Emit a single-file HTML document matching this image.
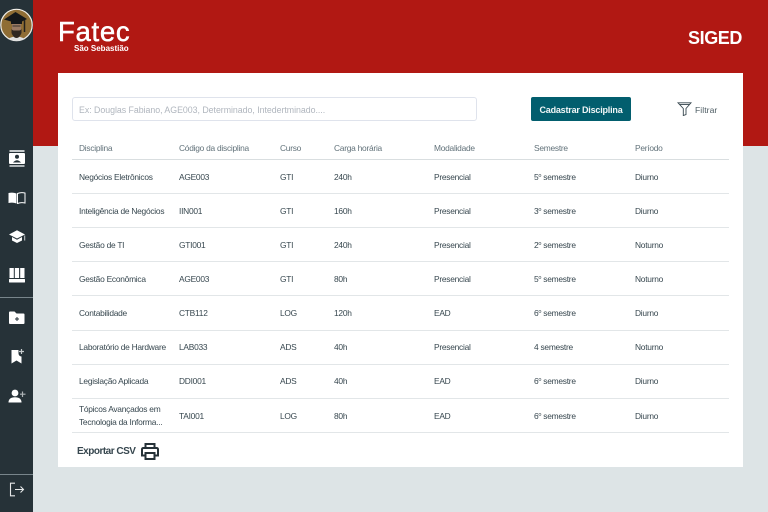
<!DOCTYPE html>
<html lang="pt-BR"><head><meta charset="utf-8"><title>SIGED</title>
<style>
*{margin:0;padding:0;box-sizing:border-box}
html,body{width:768px;height:512px;overflow:hidden;background:#dde4e6;font-family:"Liberation Sans",sans-serif}
div,span{position:absolute;white-space:nowrap}
.red{left:33px;top:0;width:735px;height:146px;background:#b11813}
.side{left:0;top:0;width:33px;height:512px;background:#263238}
.card{left:58px;top:73px;width:685px;height:394px;background:#fff}
.t{font-size:8.4px;line-height:12px;color:#37474f;letter-spacing:-.25px}
.h{font-size:8.4px;line-height:12px;color:#62727a;top:142px;letter-spacing:-.25px}
.l{left:72px;width:657px;height:1px;background:#e2e6e8}
.sep{left:0;width:33px;height:1px;background:#78858b}
svg{position:absolute}
sup{font-size:5.5px;line-height:0;vertical-align:3px}
</style></head><body>
<div class="red"></div>
<div class="side"></div>
<div class="sep" style="top:297px"></div>
<div class="sep" style="top:474px"></div>

<svg style="left:0;top:8px" width="33" height="34" viewBox="0 0 33 34">
<circle cx="16.5" cy="17" r="15.7" fill="#8f6d35" stroke="#f1efe9" stroke-width="1.2"/>
<path d="M8 31q8-5 17 0q-4 2-8.500 2t-8.500-2z" fill="#dfe0e0"/>
<path d="M12 13h9v9q0 6-4.500 7q-4.500-1-4.500-7z" fill="#9a7a64"/>
<path d="M11.500 21q1 1.500 2 1.500h6q1 0 2-1.500v4q-2 5-5 5t-5-5z" fill="#2f2822"/>
<rect x="12.500" y="17.500" width="8" height="1" fill="#3a312b"/>
<path d="M4 11.500L15.500 4 27 11l-5 2.500V16h-11v-2.500z" fill="#14171a"/>
<path d="M24.500 12v12" stroke="#23201d" stroke-width="1.500"/>
</svg>

<div style="left:58px;top:16px;font-size:27.5px;line-height:32px;color:#fff;letter-spacing:.7px;-webkit-text-stroke:.5px #fff">Fatec</div>
<div style="left:74px;top:43px;font-size:8px;line-height:11px;font-weight:700;color:#fff;letter-spacing:0">São Sebastião</div>
<div style="left:688px;top:26px;font-size:18px;line-height:24px;font-weight:700;color:#fff;letter-spacing:-.4px">SIGED</div>

<!-- sidebar icons -->
<svg style="left:9px;top:150px" width="16" height="17" viewBox="0 0 16 17"><rect x=".5" y="0" width="15" height="2" fill="#c5cacc"/><rect x="0" y="3" width="16" height="11" rx="1" fill="#fff"/><rect x=".5" y="15" width="15" height="2" fill="#aeb4b7"/><circle cx="8" cy="6.800" r="2" fill="#263238"/><path d="M4 12.500q4-4.500 8 0z" fill="#263238"/></svg>
<svg style="left:8px;top:192px" width="18" height="12" viewBox="0 0 18 12"><path d="M.5 1q4.500-1 8 .5v10q-3.500-1.500-8-.5z" fill="#fff"/><path d="M9.500 1.500q3.500-1.500 7.500-.5v10q-4-1-7.500.5z" fill="none" stroke="#fff" stroke-width="1"/></svg>
<svg style="left:9px;top:230px" width="17" height="13" viewBox="0 0 17 13"><path d="M8 .3L0 4.500l8 4 8-4z" fill="#fff"/><path d="M3 7v3.500L8 13l5-2.500V7L8 9.700z" fill="#fff"/><path d="M15.700 5.500v5" stroke="#c5cacc" stroke-width="1"/></svg>
<svg style="left:9px;top:268px" width="16" height="15" viewBox="0 0 16 15"><rect x=".5" y="0" width="4.300" height="10" fill="#fff"/><rect x="5.800" y="0" width="4.300" height="10" fill="#fff"/><rect x="11.200" y="0" width="4.300" height="10" fill="#fff"/><rect x="0" y="11" width="16" height="3.500" rx=".5" fill="#fff"/></svg>
<svg style="left:9px;top:311px" width="16" height="13" viewBox="0 0 16 13"><path d="M0 1.500Q0 .5 1 .5h4.500L7.500 2.500H14.500q1 0 1 1V12q0 1-1 1H1q-1 0-1-1z" fill="#fff"/><path d="M8 6v4M6 8h4" stroke="#263238" stroke-width="1"/></svg>
<svg style="left:11px;top:349px" width="13" height="15" viewBox="0 0 13 15"><path d="M.5 1h7v3.500a3 3 0 0 0 3 3V14.500L5.500 11.500.5 14.500z" fill="#fff"/><path d="M10.500 0v5M8 2.500h5" stroke="#c5cacc" stroke-width="1.200"/></svg>
<svg style="left:8px;top:389px" width="18" height="14" viewBox="0 0 18 14"><circle cx="7" cy="4" r="3.400" fill="#fff"/><path d="M.5 13.500q0-5.300 6.500-5.300t6.500 5.300z" fill="#fff"/><path d="M14.500 2.500v5.500M12 5.200h5.500" stroke="#aeb4b7" stroke-width="1.200"/></svg>
<svg style="left:9px;top:482px" width="16" height="15" viewBox="0 0 16 15" fill="none" stroke="#e6e8e9" stroke-width="1.100"><path d="M6 1.200H1.500v12.600H6"/><path d="M6 7.500h8.500M11.500 4.500l3 3-3 3"/></svg>

<div class="card"></div>
<div style="left:72px;top:97px;width:405px;height:24px;border:1px solid #dfe3ec;border-radius:3px;background:#fff"></div>
<div style="left:79px;top:104px;font-size:8.8px;line-height:12px;color:#b0b6be;letter-spacing:-.03px">Ex: Douglas Fabiano, AGE003, Determinado, Intedertminado....</div>
<div style="left:531px;top:97px;width:100px;height:24px;background:#025e6e;border-radius:2px"></div>
<div style="left:531px;top:103px;width:100px;color:#f1f6f7;font-size:9px;font-weight:700;line-height:14px;text-align:center;letter-spacing:-.2px">Cadastrar Disciplina</div>
<svg style="left:677px;top:102px" width="15" height="14" viewBox="0 0 15 14" fill="none" stroke="#37474f" stroke-width=".9"><path d="M1 .8h13L9 6.500v6L6.300 13.500V6.500z"/><path d="M2.500 2.500h10"/></svg>
<div style="left:695px;top:104px;font-size:8.6px;line-height:12px;color:#4d5c63;letter-spacing:.05px">Filtrar</div>

<div class="h" style="left:79px">Disciplina</div>
<div class="h" style="left:179px">Código da disciplina</div>
<div class="h" style="left:280px">Curso</div>
<div class="h" style="left:334px">Carga horária</div>
<div class="h" style="left:434px">Modalidade</div>
<div class="h" style="left:534px">Semestre</div>
<div class="h" style="left:635px">Período</div>

<div class="l" style="top:159px;background:#d9dee0"></div>
<div class="l" style="top:193px"></div>
<div class="l" style="top:227px"></div>
<div class="l" style="top:261px"></div>
<div class="l" style="top:295px"></div>
<div class="l" style="top:330px"></div>
<div class="l" style="top:364px"></div>
<div class="l" style="top:398px"></div>
<div class="l" style="top:432px"></div>

<div class="t" style="left:79px;top:171px">Negócios Eletrônicos</div><div class="t" style="left:179px;top:171px">AGE003</div><div class="t" style="left:280px;top:171px">GTI</div><div class="t" style="left:334px;top:171px">240h</div><div class="t" style="left:434px;top:171px">Presencial</div><div class="t" style="left:534px;top:171px">5<sup>o</sup> semestre</div><div class="t" style="left:635px;top:171px">Diurno</div>
<div class="t" style="left:79px;top:205px">Inteligência de Negócios</div><div class="t" style="left:179px;top:205px">IIN001</div><div class="t" style="left:280px;top:205px">GTI</div><div class="t" style="left:334px;top:205px">160h</div><div class="t" style="left:434px;top:205px">Presencial</div><div class="t" style="left:534px;top:205px">3<sup>o</sup> semestre</div><div class="t" style="left:635px;top:205px">Diurno</div>
<div class="t" style="left:79px;top:239px">Gestão de TI</div><div class="t" style="left:179px;top:239px">GTI001</div><div class="t" style="left:280px;top:239px">GTI</div><div class="t" style="left:334px;top:239px">240h</div><div class="t" style="left:434px;top:239px">Presencial</div><div class="t" style="left:534px;top:239px">2<sup>o</sup> semestre</div><div class="t" style="left:635px;top:239px">Noturno</div>
<div class="t" style="left:79px;top:273px">Gestão Econômica</div><div class="t" style="left:179px;top:273px">AGE003</div><div class="t" style="left:280px;top:273px">GTI</div><div class="t" style="left:334px;top:273px">80h</div><div class="t" style="left:434px;top:273px">Presencial</div><div class="t" style="left:534px;top:273px">5<sup>o</sup> semestre</div><div class="t" style="left:635px;top:273px">Noturno</div>
<div class="t" style="left:79px;top:307px">Contabilidade</div><div class="t" style="left:179px;top:307px">CTB112</div><div class="t" style="left:280px;top:307px">LOG</div><div class="t" style="left:334px;top:307px">120h</div><div class="t" style="left:434px;top:307px">EAD</div><div class="t" style="left:534px;top:307px">6<sup>o</sup> semestre</div><div class="t" style="left:635px;top:307px">Diurno</div>
<div class="t" style="left:79px;top:341px">Laboratório de Hardware</div><div class="t" style="left:179px;top:341px">LAB033</div><div class="t" style="left:280px;top:341px">ADS</div><div class="t" style="left:334px;top:341px">40h</div><div class="t" style="left:434px;top:341px">Presencial</div><div class="t" style="left:534px;top:341px">4 semestre</div><div class="t" style="left:635px;top:341px">Noturno</div>
<div class="t" style="left:79px;top:375px">Legislação Aplicada</div><div class="t" style="left:179px;top:375px">DDI001</div><div class="t" style="left:280px;top:375px">ADS</div><div class="t" style="left:334px;top:375px">40h</div><div class="t" style="left:434px;top:375px">EAD</div><div class="t" style="left:534px;top:375px">6<sup>o</sup> semestre</div><div class="t" style="left:635px;top:375px">Diurno</div>
<div class="t" style="left:79px;top:403px">Tópicos Avançados em</div><div class="t" style="left:79px;top:416px">Tecnologia da Informa...</div><div class="t" style="left:179px;top:410px">TAI001</div><div class="t" style="left:280px;top:410px">LOG</div><div class="t" style="left:334px;top:410px">80h</div><div class="t" style="left:434px;top:410px">EAD</div><div class="t" style="left:534px;top:410px">6<sup>o</sup> semestre</div><div class="t" style="left:635px;top:410px">Diurno</div>

<div style="left:77px;top:445px;font-size:10px;line-height:13px;font-weight:700;color:#37474f;letter-spacing:-.5px">Exportar CSV</div>
<svg style="left:141px;top:443px" width="18" height="17" viewBox="0 0 18 17" fill="none" stroke="#263238" stroke-width="2"><path d="M4.500 5V1h9v4"/><path d="M4.500 12.500H1V6.500q0-1.500 1.500-1.500h13q1.500 0 1.500 1.500v6h-3.500"/><rect x="4.500" y="10" width="9" height="6"/></svg>
</body></html>
